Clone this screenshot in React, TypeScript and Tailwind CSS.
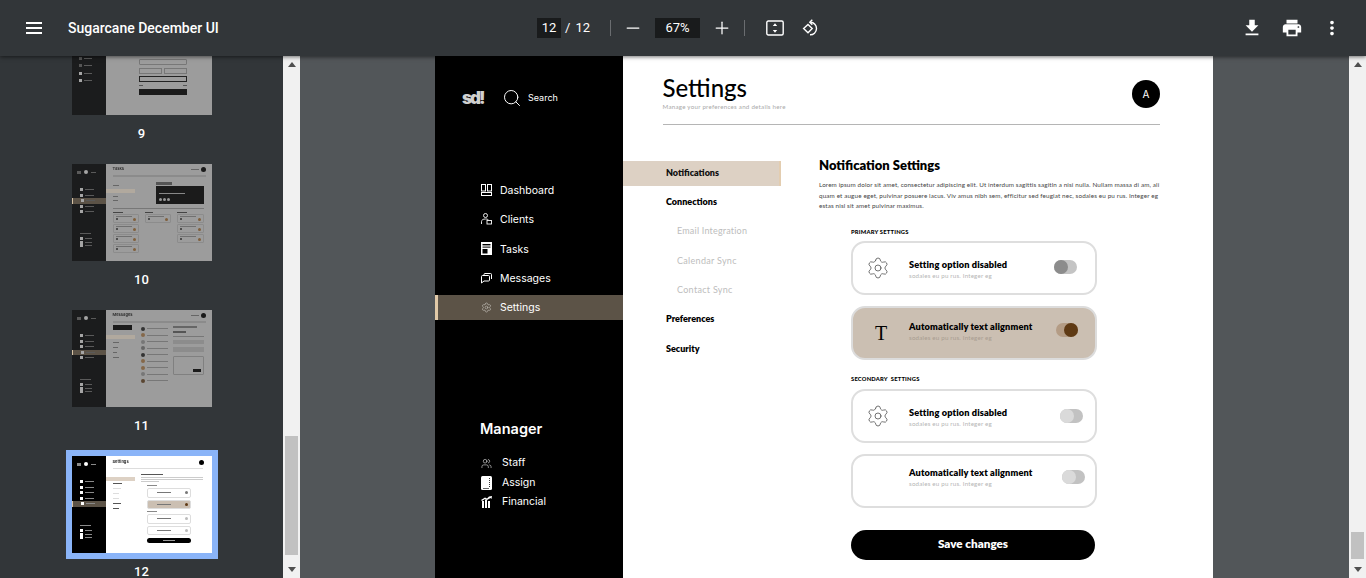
import { Settings, Search, Users, Minus, Plus } from "lucide-react";

const poppins = "font-['Inter','Liberation_Sans',sans-serif]";
const raleway = "font-['Lato','Liberation_Sans',sans-serif]";

function Scrollbar({ thumbClass }: { thumbClass: string }) {
  return (
    <div className="flex w-[17px] shrink-0 flex-col bg-[#f1f1f1]">
      <div className="flex h-[17px] items-center justify-center">
        <svg width="8" height="5" viewBox="0 0 8 5"><path d="M4 0 8 5H0z" fill="#505050" /></svg>
      </div>
      <div className={`mx-auto w-[13px] bg-[#c1c1c1] ${thumbClass}`} />
      <div className="mt-auto flex h-[17px] items-center justify-center">
        <svg width="8" height="5" viewBox="0 0 8 5"><path d="M4 5 8 0H0z" fill="#505050" /></svg>
      </div>
    </div>
  );
}

function Toolbar() {
  return (
    <header className="relative z-10 flex h-14 shrink-0 items-center bg-[#323639] text-white shadow-[0_1px_4px_rgba(0,0,0,0.55)] font-['Roboto',sans-serif]">
      <div className="flex w-[537px] shrink-0 items-center">
        <svg className="ml-[26px]" width="16" height="12" viewBox="0 0 16 12" fill="#fff">
          <rect width="16" height="2" />
          <rect y="5" width="16" height="2" />
          <rect y="10" width="16" height="2" />
        </svg>
        <span className="ml-[26px] text-[14px] font-medium">Sugarcane December UI</span>
      </div>
      <div className="flex h-5 w-6 items-center justify-center bg-[#191b1c] text-[13px]">12</div>
      <span className="ml-[4px] text-[13px]">/</span>
      <span className="ml-[5px] text-[13px]">12</span>
      <div className="ml-5 h-4 w-px bg-[#6a6d70]" />
      <Minus className="ml-[12px]" size={20} strokeWidth={1.5} />
      <div className="ml-[12px] flex h-5 w-[45px] items-center justify-center bg-[#191b1c] text-[13px]">67%</div>
      <Plus className="ml-[12px]" size={20} strokeWidth={1.5} />
      <div className="ml-[12px] h-4 w-px bg-[#6a6d70]" />
      <svg className="ml-[21px]" width="18" height="16" viewBox="0 0 18 16" fill="none">
        <rect x="0.8" y="1" width="16.4" height="14" rx="1.5" stroke="#fff" strokeWidth="1.4" />
        <path d="M9 3.2 11.2 6H6.8zM9 12.8 6.8 10h4.4z" fill="#fff" />
      </svg>
      <svg className="ml-[18px]" width="18" height="18" viewBox="0 0 18 18" fill="none" stroke="#fff" strokeWidth="1.4">
        <path d="M6 5.5 10.2 9.6 6 13.8 1.6 9.6z" />
        <path d="M8.5 3.3A6.2 6.2 0 1 1 8 15.8" />
        <path d="M10.3 0.8 7.8 3.3l2.5 2.4" />
      </svg>
      <div className="ml-auto flex items-center">
        <svg width="22" height="22" viewBox="0 0 24 24" fill="#fff"><path d="M19 9h-4V3H9v6H5l7 7 7-7zM5 18v2h14v-2H5z" /></svg>
        <svg className="ml-[18px]" width="22" height="22" viewBox="0 0 24 24" fill="#fff"><path d="M19 8H5c-1.66 0-3 1.34-3 3v6h4v4h12v-4h4v-6c0-1.66-1.34-3-3-3zm-3 11H8v-5h8v5zm3-7c-.55 0-1-.45-1-1s.45-1 1-1 1 .45 1 1-.45 1-1 1zm-1-9H6v4h12V3z" /></svg>
        <svg className="ml-[18px] mr-[23px]" width="22" height="22" viewBox="0 0 24 24" fill="#fff"><path d="M12 8c1.1 0 2-.9 2-2s-.9-2-2-2-2 .9-2 2 .9 2 2 2zm0 2c-1.1 0-2 .9-2 2s.9 2 2 2 2-.9 2-2-.9-2-2-2zm0 6c-1.1 0-2 .9-2 2s.9 2 2 2 2-.9 2-2-.9-2-2-2z" /></svg>
      </div>
    </header>
  );
}

function MiniSide({ active, dim }: { active: number; dim?: boolean }) {
  const bar = dim ? "bg-[#5a5a5a]" : "bg-[#8a8a8a]";
  const box = dim ? "bg-[#a5a5a5]" : "bg-white";
  return (
    <div className={`flex w-[34px] shrink-0 flex-col ${dim ? "bg-[#1b1c1d]" : "bg-black"}`}>
      <div className="mt-[6px] flex items-center gap-[3px] pl-[5px]">
        <div className={`h-[3px] w-[4px] ${bar}`} />
        <div className={`size-[4px] rounded-full ${box}`} />
        <div className={`h-px w-[5px] ${bar}`} />
      </div>
      <div className="mt-[13px] flex flex-col">
        {[0, 1, 2, 3, 4].map((i) => (
          <div key={i} className={`flex h-[5.5px] items-center gap-[2px] pl-[8px] ${i === active ? "border-l border-[#d8c3a5] bg-[#5c5347]" : ""}`}>
            <div className={`size-[3px] ${box}`} />
            <div className={`h-px w-[9px] ${bar}`} />
          </div>
        ))}
      </div>
      <div className={`ml-[8px] mt-[18px] h-[1.5px] w-[11px] ${bar}`} />
      <div className="mt-[3px] flex flex-col">
        {[0, 1, 2].map((i) => (
          <div key={i} className="flex h-[3.4px] items-center gap-[2px] pl-[8px]">
            <div className={`size-[3px] ${box}`} />
            <div className={`h-px w-[7px] ${bar}`} />
          </div>
        ))}
      </div>
    </div>
  );
}

function MiniHead({ title, right }: { title: string; right?: boolean }) {
  return (
    <>
      <div className="flex h-[10px] items-center justify-between pl-[7px] pr-[6px]">
        <span className={`${poppins} text-[4px] font-bold text-[#333]`}>{title}</span>
        <div className="flex items-center gap-[2px]">
          {right && <div className="h-px w-[8px] bg-[#666]" />}
          <div className="size-[5px] rounded-full bg-[#1a1a1a]" />
        </div>
      </div>
      <div className="ml-[7px] mr-[6px] mt-[1px] h-[1.5px] bg-[#8b8b8b]" />
    </>
  );
}

function Page9() {
  return (
    <div className="flex h-full bg-[#9c9c9c]">
      <div className="flex w-[34px] shrink-0 flex-col gap-[4.6px] bg-[#1b1c1d] pl-[7px] pt-[38.5px]">
        {[0, 1, 2, 3].map((i) => (
          <div key={i} className="flex h-[3px] items-center gap-[2px]">
            <div className={`size-[3px] ${i > 1 ? "bg-[#a5a5a5]" : "bg-[#555]"}`} />
            <div className="h-px w-[8px] bg-[#5a5a5a]" />
          </div>
        ))}
      </div>
      <div className="flex flex-1 flex-col pl-[33px] pr-[25px] pt-[41px]">
        <div className="h-[6px] rounded-[1px] border border-[#777]" />
        <div className="mt-[3px] flex gap-[2px]">
          <div className="h-[6px] flex-1 border border-[#777]" />
          <div className="h-[6px] flex-1 border border-[#777]" />
        </div>
        <div className="mt-[2px] h-[6px] border border-[#222]" />
        <div className="mt-[3px] flex justify-between">
          <div className="h-px w-[4px] bg-[#555]" />
          <div className="h-px w-[4px] bg-[#555]" />
        </div>
        <div className="mt-[3px] h-[6px] bg-[#1b1b1b]" />
      </div>
    </div>
  );
}

function MiniCard() {
  return (
    <div className="flex h-[9px] flex-col justify-center gap-[1px] rounded-[1px] border border-[#8c8c8c] px-[2px]">
      <div className="h-px w-[16px] bg-[#707070]" />
      <div className="flex items-center justify-between">
        <div className="size-[2px] rounded-full bg-[#333]" />
        <div className="size-[3px] rounded-full bg-[#80603c]" />
      </div>
    </div>
  );
}

function Page10() {
  return (
    <div className="flex h-full bg-[#9c9c9c]">
      <MiniSide active={2} dim />
      <div className="flex flex-1 flex-col">
        <MiniHead title="Tasks" right />
        <div className="flex">
          <div className="mt-[8px] flex w-[29px] flex-col gap-[3px]">
            <div className="ml-[7px] h-px w-[6px] bg-[#666]" />
            <div className="h-[4px] bg-[#b1a99e]" />
            <div className="ml-[7px] h-px w-[5px] bg-[#666]" />
            <div className="ml-[7px] h-px w-[5px] bg-[#666]" />
          </div>
          <div className="ml-[21px] mt-[5px] w-[48px]">
            <div className="h-[3px] w-[16px] bg-[#555]" />
            <div className="mt-[1px] flex h-[18px] flex-col justify-end gap-[1px] bg-[#1b1b1b] p-[3px]">
              <div className="mb-[3px] h-px w-[26px] bg-[#888]" />
              <div className="flex gap-[1px]">
                <div className="size-[3px] rounded-full bg-[#999]" />
                <div className="size-[3px] rounded-full bg-[#999]" />
                <div className="size-[3px] rounded-full bg-[#999]" />
              </div>
            </div>
          </div>
        </div>
        <div className="ml-[7px] mr-[8px] mt-[4px] h-px bg-[#777]" />
        <div className="mt-[3px] grid grid-cols-3 gap-[6px] pl-[7px] pr-[8px]">
          <div className="flex flex-col gap-[1px]"><div className="h-px w-[10px] bg-[#444]" /><MiniCard /><MiniCard /><MiniCard /><MiniCard /></div>
          <div className="flex flex-col gap-[1px]"><div className="h-px w-[8px] bg-[#444]" /><MiniCard /></div>
          <div className="flex flex-col gap-[1px]"><div className="h-px w-[10px] bg-[#444]" /><MiniCard /><MiniCard /><MiniCard /></div>
        </div>
      </div>
    </div>
  );
}

function Page11() {
  const rows = ["bg-[#333]", "bg-[#85684a]", "bg-[#777]", "bg-[#666]", "bg-[#333]", "bg-[#85684a]", "bg-[#85684a]", "bg-[#777]", "bg-[#5a4632]"];
  return (
    <div className="flex h-full bg-[#9c9c9c]">
      <MiniSide active={3} dim />
      <div className="flex flex-1 flex-col">
        <MiniHead title="Messages" right />
        <div className="flex">
          <div className="w-[29px]">
            <div className="ml-[7px] mt-[2px] h-[5px] w-[19px] bg-[#1b1b1b]" />
            <div className="mt-[5px] h-[4px] bg-[#b1a99e]" />
            <div className="ml-[7px] mt-[3px] flex flex-col gap-[4px]">
              <div className="h-px w-[6px] bg-[#666]" />
              <div className="h-px w-[5px] bg-[#666]" />
              <div className="h-px w-[4px] bg-[#666]" />
              <div className="h-px w-[6px] bg-[#666]" />
            </div>
          </div>
          <div className="ml-[6px] mt-[4px] flex w-[27px] flex-col gap-[2.5px]">
            {rows.map((c, i) => (
              <div key={i} className="flex items-center gap-[2px]">
                <div className={`size-[4px] rounded-full ${c}`} />
                <div className="h-px flex-1 bg-[#777]" />
              </div>
            ))}
          </div>
          <div className="ml-[5px] mt-[3px] flex w-[31px] flex-col gap-[3px]">
            <div className="h-[2px] w-[24px] bg-[#666]" />
            <div className="h-[2px] w-[13px] bg-[#555]" />
            <div className="h-px bg-[#777]" />
            <div className="h-[4px] bg-[#8c8c8c]" />
            <div className="h-[5px] bg-[#8c8c8c]" />
            <div className="mt-[1px] flex h-[19px] flex-col justify-end rounded-[1px] border border-[#808080] p-[2px]">
              <div className="ml-auto h-[3px] w-[8px] bg-[#1b1b1b]" />
            </div>
          </div>
        </div>
      </div>
    </div>
  );
}

function MiniOption({ fill, knob }: { fill?: boolean; knob: string }) {
  return (
    <div className={`flex h-[9.5px] items-center justify-between rounded-[2px] border border-[#ddd] px-[2px] ${fill ? "bg-[#cbbfb2]" : "bg-white"}`}>
      <div className="ml-[7px] h-px w-[14px] bg-[#777]" />
      <div className={`size-[3px] rounded-full ${knob}`} />
    </div>
  );
}

function Page12() {
  return (
    <div className="flex h-full bg-white">
      <MiniSide active={4} />
      <div className="flex flex-1 flex-col">
        <div className="flex h-[10px] items-center justify-between pl-[7px] pr-[8px] pt-[2px]">
          <span className={`${poppins} text-[4px] font-bold text-[#333]`}>Settings</span>
          <div className="size-[5px] rounded-full bg-black" />
        </div>
        <div className="ml-[7px] mr-[9px] mt-[2px] h-px bg-[#ddd]" />
        <div className="flex">
          <div className="w-[29px] pt-[8px]">
            <div className="h-[4px] bg-[#ddd1c4]" />
            <div className="ml-[7px] mt-[2px] flex flex-col gap-[4px]">
              <div className="h-px w-[9px] bg-[#555]" />
              <div className="h-px w-[8px] bg-[#ddd]" />
              <div className="h-px w-[6px] bg-[#ddd]" />
              <div className="h-px w-[6px] bg-[#ddd]" />
              <div className="h-px w-[8px] bg-[#555]" />
              <div className="h-px w-[6px] bg-[#555]" />
            </div>
          </div>
          <div className="ml-[6px] mt-[5px] w-[62px]">
            <div className="h-px w-[22px] bg-[#555]" />
            <div className="mt-[2px] h-px bg-[#ccc]" />
            <div className="mt-[1px] h-px bg-[#ccc]" />
            <div className="mt-[1px] h-px w-[18px] bg-[#ccc]" />
            <div className="ml-[6px] mt-[3px] flex w-[44px] flex-col gap-[2px]">
              <div className="h-px w-[10px] bg-[#888]" />
              <MiniOption knob="bg-[#777]" />
              <MiniOption fill knob="bg-[#5f3a14]" />
              <div className="h-px w-[10px] bg-[#888]" />
              <MiniOption knob="bg-[#bbb]" />
              <MiniOption knob="bg-[#bbb]" />
              <div className="mt-[1px] flex h-[5px] items-center justify-center rounded-full bg-black">
                <div className="h-px w-[12px] bg-[#999]" />
              </div>
            </div>
          </div>
        </div>
      </div>
    </div>
  );
}

function ThumbList() {
  const pages = [
    { label: "9", el: <Page9 />, ring: "" },
    { label: "10", el: <Page10 />, ring: "" },
    { label: "11", el: <Page11 />, ring: "" },
    { label: "12", el: <Page12 />, ring: "outline-[6px] outline-[#8ab4f8]" },
  ];
  return (
    <div className="w-[283px] shrink-0 overflow-hidden bg-[#323639] font-['Roboto',sans-serif]">
      <div className="-mt-[38px] flex flex-col items-center">
        {pages.map((p) => (
          <div key={p.label} className="mb-[13px] flex flex-col items-center">
            <div className={`h-[97px] w-[140px] overflow-hidden ${p.ring}`}>
              <div className="h-full blur-[0.55px]">{p.el}</div>
            </div>
            <div className="flex h-[36px] items-center pt-[1px] text-[13px] font-medium text-white">{p.label}</div>
          </div>
        ))}
      </div>
    </div>
  );
}

function NavRow({ icon, label, active }: { icon: React.ReactNode; label: string; active?: boolean }) {
  return (
    <div className={`flex h-[25px] items-center text-[10.5px] text-white ${active ? "border-l-[3px] border-[#e0c9a8] bg-[#5c5347] pl-[43px]" : "pl-[46px]"}`}>
      <span className="flex w-[19px] shrink-0 items-center">{icon}</span>
      <span className="pt-[1px]">{label}</span>
    </div>
  );
}

function Sidebar() {
  return (
    <aside className={`flex w-[188px] shrink-0 flex-col bg-black ${poppins}`}>
      <div className="mt-[28px] flex h-[28px] items-center">
        <span className="ml-[27px] w-[40px] text-[17px] font-black leading-none tracking-[-2px] text-[#d0d0d0]">sd!</span>
        <Search size={20} strokeWidth={1.2} color="#fff" />
        <span className="ml-[6px] text-[9px] text-white">Search</span>
      </div>
      <nav className="mt-[65.6px] flex flex-col gap-[4.4px]">
        <NavRow label="Dashboard" icon={
          <svg width="11" height="12" viewBox="0 0 11 12" fill="none" stroke="#fff"><rect x="0.5" y="0.5" width="4" height="6.5" /><rect x="6.5" y="0.5" width="4" height="6.5" /><rect x="0.5" y="8.5" width="10" height="3" /></svg>
        } />
        <NavRow label="Clients" icon={
          <svg width="11" height="12" viewBox="0 0 11 12" fill="none" stroke="#fff" strokeWidth="0.9"><circle cx="4.5" cy="2.5" r="2" /><path d="M0.5 11V8.5C0.5 7 2 6 4.5 6S7 6.5 7 7" /><rect x="6" y="7.5" width="4.5" height="3.5" fill="#000" /></svg>
        } />
        <NavRow label="Tasks" icon={
          <svg width="11" height="13" viewBox="0 0 11 13"><rect width="11" height="13" fill="#fff" /><rect x="1.5" y="2" width="8" height="1.4" fill="#000" /><rect x="1.5" y="4.6" width="8" height="1" fill="#000" /><rect x="1.5" y="7" width="5" height="4.5" fill="#000" /></svg>
        } />
        <NavRow label="Messages" icon={
          <svg width="11" height="11" viewBox="0 0 11 11" fill="none" stroke="#fff"><path d="M3 2V1.5A1 1 0 0 1 4 .5h5.5a1 1 0 0 1 1 1V6" /><path d="M1.5 2.5h6a1 1 0 0 1 1 1V7a1 1 0 0 1-1 1H3L.5 10V3.5a1 1 0 0 1 1-1z" /></svg>
        } />
        <NavRow active label="Settings" icon={<Settings size={11} strokeWidth={1.3} color="#c9c5bf" />} />
      </nav>
      <div className="ml-[45px] mt-[98.4px] flex h-5 items-center text-[14.5px] font-semibold text-white">Manager</div>
      <div className="mt-[15px] flex flex-col">
        <ManagerRow label="Staff" icon={<Users size={11} strokeWidth={1.2} color="#fff" />} />
        <ManagerRow label="Assign" icon={
          <svg width="11" height="14" viewBox="0 0 11 14"><rect width="11" height="14" rx="1.5" fill="#fff" /><path d="M8.5 2v10" stroke="#000" strokeWidth="0.8" strokeDasharray="1 1" /><path d="M2 12.5h6" stroke="#000" strokeWidth="0.6" /></svg>
        } />
        <ManagerRow label="Financial" icon={
          <svg width="11" height="12" viewBox="0 0 11 12" fill="#fff"><rect x="1" y="5" width="2" height="7" /><rect x="4" y="3.5" width="2" height="8.5" /><rect x="7" y="5" width="2" height="7" /><path d="M0 4 4 1.5 6 2.5 8 0.5 11 0 10.5 3 9.5 2 6 4 4 3 1 5z" /></svg>
        } />
      </div>
    </aside>
  );
}

function ManagerRow({ icon, label }: { icon: React.ReactNode; label: string }) {
  return (
    <div className="flex h-[19.5px] items-center pl-[46px] text-[10.5px] text-white">
      <span className="flex w-[21px] shrink-0 items-center">{icon}</span>
      <span>{label}</span>
    </div>
  );
}

const tabs = [
  { label: "Notifications", cls: "border-r-[2px] border-[#e3cdb0] bg-[#ddd1c4] pl-[43px] font-extrabold text-[#111]" },
  { label: "Connections", cls: "pl-[43px] font-extrabold text-black" },
  { label: "Email Integration", cls: "pl-[54px] tracking-[0.2px] text-[#bdbdbd]" },
  { label: "Calendar Sync", cls: "pl-[54px] tracking-[0.3px] text-[#bdbdbd]" },
  { label: "Contact Sync", cls: "pl-[54px] tracking-[0.3px] text-[#bdbdbd]" },
  { label: "Preferences", cls: "pl-[43px] font-extrabold text-black" },
  { label: "Security", cls: "pl-[43px] font-extrabold text-black" },
];

function Toggle({ cls, track, knob }: { cls: string; track: string; knob: string }) {
  return (
    <div className={`ml-auto flex h-[14px] w-[23px] rounded-full ${track} ${cls}`}>
      <div className={`size-[14px] rounded-full ${knob}`} />
    </div>
  );
}

function Option({ title, icon, fill, textCls, toggle }: { title: string; icon?: React.ReactNode; fill?: boolean; textCls: string; toggle: React.ReactNode }) {
  return (
    <div className={`flex h-[54px] w-[246px] items-center rounded-[14px] border-2 pl-[15px] ${fill ? "border-[#dcdcdc] bg-[#cbbfb2]" : "border-[#dedede] bg-white"}`}>
      <div className="flex w-[41px] shrink-0 items-center">{icon}</div>
      <div className={`flex flex-col ${textCls}`}>
        <span className="text-[9.2px] font-extrabold leading-[12px] tracking-[0.12px] text-black">{title}</span>
        <span className={`text-[6.2px] leading-[9px] tracking-[0.2px] ${fill ? "text-[#a89d91]" : "text-[#b5b5b5]"}`}>sodales eu pu rus. Integer eg</span>
      </div>
      {toggle}
    </div>
  );
}

function PdfPage() {
  return (
    <div className="ml-[135px] flex h-[522px] w-[778px] shrink-0 overflow-hidden">
      <Sidebar />
      <section className={`flex-1 bg-white ${raleway}`}>
        <div className="ml-[40px] mr-[53px] mt-[18px] flex items-start justify-between border-b border-[#b5b5b5] pb-[13px]">
          <div className="-ml-[0.5px]">
            <h1 className="text-[24px] font-medium leading-[28px] text-black">Settings</h1>
            <p className="pt-[1px] text-[6.2px] leading-[8px] tracking-[0.25px] text-[#a9a9a9]">Manage your preferences and details here</p>
          </div>
          <div className={`mt-[6px] flex size-[28px] items-center justify-center rounded-full bg-black text-[10px] text-white ${poppins}`}>A</div>
        </div>
        <div className="mt-[32px] flex items-start">
          <div className="mt-[4px] flex w-[158px] shrink-0 flex-col gap-[4.3px]">
            {tabs.map((t) => (
              <div key={t.label} className={`flex h-[25px] items-center pb-[2px] text-[9px] ${t.cls}`}>{t.label}</div>
            ))}
          </div>
          <div className="ml-[38px] flex-1">
            <h2 className="text-[13px] font-extrabold leading-[16px] text-black">Notification Settings</h2>
            <p className="mt-[7px] whitespace-nowrap text-[6.3px] leading-[10.5px] tracking-[0.135px] text-[#444]">
              <span className="block">Lorem ipsum dolor sit amet, consectetur adipiscing elit. Ut interdum sagittis sagitln a nisi nulla. Nullam massa di am, ali</span>
              <span className="block">quam et augue eget, pulvinar posuere lacus. Viv amus nibh sem, efficitur sed feugiat nec, sodales eu pu rus. Integer eg</span>
              <span className="block">estas nisl sit amet pulvinar maximus.</span>
            </p>
            <div className="ml-[32px] flex flex-col items-start">
              <h3 className="mt-[16.5px] text-[5.8px] font-black leading-[8px] tracking-[0.2px] text-black">PRIMARY SETTINGS</h3>
              <div className="mt-[5px] flex flex-col gap-[11px]">
                <Option
                  title="Setting option disabled"
                  textCls="mt-[2px]"
                  icon={<Settings className="-ml-[2px]" size={24} strokeWidth={0.75} color="#444" />}
                  toggle={<Toggle cls="mr-[18px] mb-[2px]" track="bg-[#c4c4c4]" knob="bg-[#8c8c8c]" />}
                />
                <Option
                  fill
                  title="Automatically text alignment"
                  textCls="-mt-[4px]"
                  icon={<span className="mb-[1px] ml-[7px] font-['Liberation_Serif',serif] text-[20px] leading-none text-black">T</span>}
                  toggle={<div className="mb-[6px] ml-auto mr-[17px] flex h-[14px] w-[22px] justify-end rounded-full bg-[#b49c85]"><div className="size-[14px] rounded-full bg-[#5f3a14]" /></div>}
                />
              </div>
              <h3 className="mt-[15px] text-[5.8px] font-black leading-[8px] tracking-[0.2px] text-black">SECONDARY&nbsp; SETTINGS</h3>
              <div className="mt-[6px] flex flex-col gap-[11px]">
                <Option
                  title="Setting option disabled"
                  textCls="mt-[3px]"
                  icon={<Settings className="-ml-[2px]" size={24} strokeWidth={0.75} color="#444" />}
                  toggle={<Toggle cls="mr-[12px]" track="bg-[#c2c2c2]" knob="bg-[#dadada]" />}
                />
                <Option
                  title="Automatically text alignment"
                  textCls="-mt-[7px]"
                  toggle={<Toggle cls="mr-[10px] mb-[8px]" track="bg-[#c2c2c2]" knob="bg-[#dadada]" />}
                />
              </div>
              <button className="mt-[22px] flex h-[30px] w-[244px] items-center justify-center rounded-full bg-black pb-[3px] text-[11.7px] font-extrabold text-white">Save changes</button>
            </div>
          </div>
        </div>
      </section>
    </div>
  );
}

export default function App() {
  return (
    <div className="flex h-[578px] w-[1366px] flex-col overflow-hidden bg-[#323639]">
      <Toolbar />
      <div className="flex min-h-0 flex-1">
        <ThumbList />
        <Scrollbar thumbClass="mt-[363px] h-[119px]" />
        <main className="flex flex-1 overflow-hidden bg-[#525659]">
          <PdfPage />
        </main>
        <Scrollbar thumbClass="mt-[459px] h-[27px]" />
      </div>
    </div>
  );
}
